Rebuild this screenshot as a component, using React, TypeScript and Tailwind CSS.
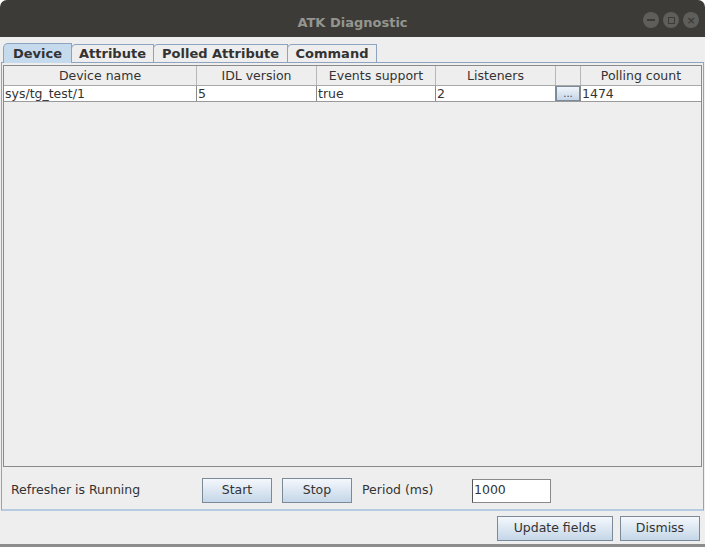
const cols = [
  { name: "Device name", w: "w-[193px]", val: "sys/tg_test/1" },
  { name: "IDL version", w: "w-[120px]", val: "5" },
  { name: "Events support", w: "w-[119px]", val: "true" },
  { name: "Listeners", w: "w-[120px]", val: "2" },
  { name: "", w: "w-[25px]", val: "btn" },
  { name: "Polling count", w: "flex-1", val: "1474" },
];

const tabs = ["Device", "Attribute", "Polled Attribute", "Command"];
const tabW = ["w-[69px]", "w-[83px]", "w-[135px]", "w-[90px]"];

const JButton = ({ label, w }: { label: string; w: string }) => (
  <button
    className={`${w} h-[25px] border border-[#7a8a99] bg-gradient-to-b from-[#f4f8fc] to-[#c5d6e8] text-[12.5px] text-[#333]`}
  >
    {label}
  </button>
);

export default function App() {
  return (
    <div
      className="w-[705px] h-[547px] bg-white overflow-hidden"
      style={{ fontFamily: '"DejaVu Sans", sans-serif' }}
    >
      <div className="w-full h-full flex flex-col bg-[#eeeeee] rounded-t-[7px] overflow-hidden">
        {/* title bar */}
        <div className="h-[37px] shrink-0 bg-[#3c3b37] flex items-center relative">
          <div className="flex-1 text-center text-[13px] font-bold text-[#95958f] pt-[8px]">
            ATK Diagnostic
          </div>
          <div className="absolute right-[6px] top-[12px] flex gap-[4px]">
            <div className="w-[16px] h-[16px] rounded-full bg-[#5f5e5a] flex items-center justify-center">
              <div className="w-[8px] h-[1.5px] bg-[#3c3b37]" />
            </div>
            <div className="w-[16px] h-[16px] rounded-full bg-[#5f5e5a] flex items-center justify-center">
              <div className="w-[7px] h-[7px] border-[1.5px] border-[#3c3b37]" />
            </div>
            <div className="w-[16px] h-[16px] rounded-full bg-[#5f5e5a] flex items-center justify-center text-[#3c3b37] text-[11px] font-bold leading-none">
              ×
            </div>
          </div>
        </div>

        {/* tabs */}
        <div className="flex pl-[3px] mt-[6px] h-[19px] shrink-0">
          {tabs.map((t, i) => (
            <div
              key={t}
              className={`${tabW[i]} ${i === 0 ? "bg-[#c6daee] h-[20px] z-10" : "bg-[#eeeeee] h-[19px] mt-[1px]"} border border-b-0 border-[#8da4c0] rounded-tl-[5px] text-[13px] font-bold text-[#333] flex items-center justify-center -mr-[1px]`}
            >
              {t}
            </div>
          ))}
        </div>

        {/* tab content */}
        <div className="mx-[1px] h-[449px] shrink-0 border border-[#8da4c0] border-b-[2px] border-b-[#b7cbe0] flex flex-col px-[1px] pt-[2px]">
          <div className="h-[402px] border border-[#8a8a8a] bg-[#eeeeee] flex flex-col">
            <div className="flex h-[20px] bg-[#eeeeee] border-b border-[#a9a9a9]">
              {cols.map((c, i) => (
                <div
                  key={i}
                  className={`${c.w} ${i < cols.length - 1 ? "border-r border-[#b8b8b8]" : ""} text-[12.5px] text-[#333] flex items-center justify-center pt-[2px]`}
                >
                  {c.name}
                </div>
              ))}
            </div>
            <div className="flex h-[16px] bg-white border-b border-[#9a9a9a]">
              {cols.map((c, i) =>
                c.val === "btn" ? (
                  <div
                    key={i}
                    className={`${c.w} border-r border-[#8a8a8a] flex`}
                  >
                    <div className="flex-1 border border-[#7a8a99] bg-gradient-to-b from-[#f0f5fa] to-[#c5d6e8] text-[10px] text-[#444] flex items-end justify-center leading-[12px]">
                      ...
                    </div>
                  </div>
                ) : (
                  <div
                    key={i}
                    className={`${c.w} ${i < cols.length - 1 ? "border-r border-[#8a8a8a]" : ""} text-[12.5px] text-[#333] pl-[1px] leading-[15px]`}
                  >
                    {c.val}
                  </div>
                )
              )}
            </div>
          </div>

          {/* refresher controls */}
          <div className="flex items-center h-[25px] mt-[11px] text-[12.5px] text-[#333]">
            <div className="w-[199px] pl-[8px]">Refresher is Running</div>
            <JButton label="Start" w="w-[70px]" />
            <div className="w-[10px]" />
            <JButton label="Stop" w="w-[70px]" />
            <div className="w-[120px] pl-[10px]">Period (ms)</div>
            <div className="w-[79px] h-[24px] border border-[#8a8a8a] border-l-[#555] bg-white flex items-center pl-[1px]">
              1000
            </div>
          </div>
        </div>

        {/* bottom buttons */}
        <div className="flex justify-end gap-[7px] pr-[5px] mt-[5px]">
          <JButton label="Update fields" w="w-[116px]" />
          <JButton label="Dismiss" w="w-[80px]" />
        </div>
        <div className="flex-1" />
        <div className="h-[3px] bg-[#8c8c8c]" />
      </div>
    </div>
  );
}
